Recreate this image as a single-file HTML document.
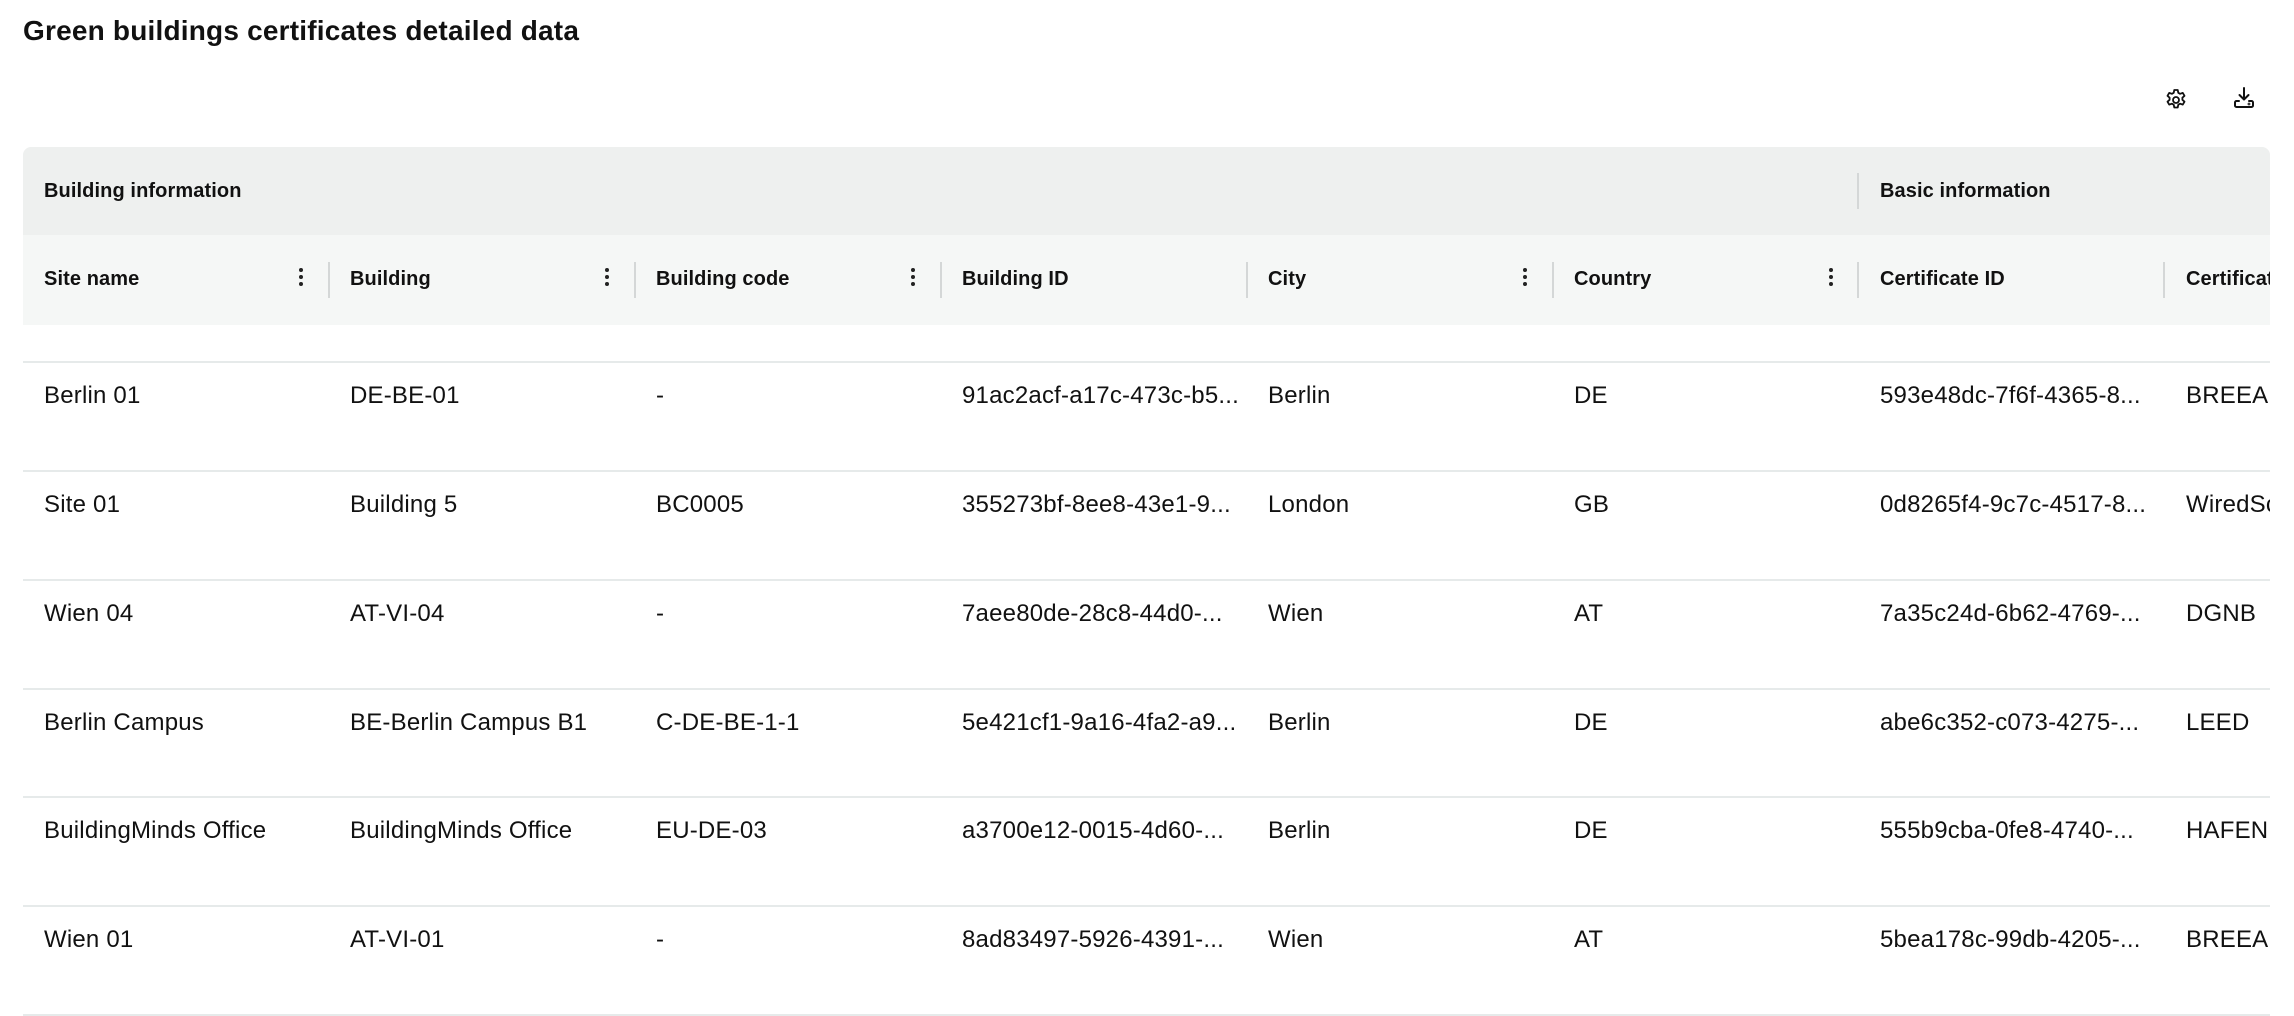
<!DOCTYPE html>
<html><head><meta charset="utf-8"><style>
*{box-sizing:border-box;margin:0;padding:0}
body{width:2294px;height:1016px;background:#fff;font-family:"Liberation Sans",sans-serif;color:#111;position:relative;overflow:hidden}
h1{position:absolute;left:23px;top:15px;font-size:28px;font-weight:bold;letter-spacing:0.2px}
.ic{position:absolute}
.tbl{position:absolute;left:23px;top:147px;width:2247px;height:869px;overflow:hidden;border-radius:8px 8px 0 0}
.g{position:absolute;left:0;top:0;width:100%;height:88px;background:#eef0ef}
.h{position:absolute;left:0;top:88px;width:100%;height:90px;background:#f5f7f6}
.t{position:absolute;font-size:20px;font-weight:bold;white-space:nowrap;letter-spacing:0.1px}
.c{position:absolute;font-size:24px;white-space:nowrap;letter-spacing:0.2px}
.sep{position:absolute;width:2px;background:#d4d7d7}
.dots{position:absolute;width:4px}
.dots i{display:block;width:4px;height:4px;border-radius:2px;background:#222;margin-bottom:3px}
.ln{position:absolute;left:0;width:100%;height:2px;background:#e6eaea}
</style></head><body>
<h1>Green buildings certificates detailed data</h1>
<svg class="ic" style="left:2164px;top:88px" width="24" height="24" viewBox="0 0 24 24" fill="none" stroke="#111" stroke-width="1.8" stroke-linejoin="round"><path d="M10.3 2h3.4l.6 2.8 1.8 1 2.7-.9 1.7 2.9-2.1 1.9v2.1l2.1 1.9-1.7 2.9-2.7-.9-1.8 1-.6 2.8h-3.4l-.6-2.8-1.8-1-2.7.9-1.7-2.9 2.1-1.9v-2.1L3.5 7.8l1.7-2.9 2.7.9 1.8-1z"/><circle cx="12" cy="12" r="3"/></svg>
<svg class="ic" style="left:2232px;top:86px" width="24" height="24" viewBox="0 0 24 24" fill="none" stroke="#111" stroke-width="2" stroke-linecap="round" stroke-linejoin="round"><path d="M12 2v11M7.5 9l4.5 4.5L16.5 9"/><path d="M7 15H4.5A1.5 1.5 0 0 0 3 16.5v3A1.5 1.5 0 0 0 4.5 21h15a1.5 1.5 0 0 0 1.5-1.5v-3a1.5 1.5 0 0 0-1.5-1.5H17"/><circle cx="17" cy="18" r=".4" fill="#111"/></svg>
<div class="tbl">
<div class="g"></div><div class="h"></div>
<div class="t" style="left:21px;top:33px">Building information</div>
<div class="sep" style="left:1834px;top:26px;height:36px"></div>
<div class="t" style="left:1857px;top:33px">Basic information</div>
<div class="t" style="left:21px;top:121px">Site name</div>
<div class="t" style="left:327px;top:121px">Building</div>
<div class="t" style="left:633px;top:121px">Building code</div>
<div class="t" style="left:939px;top:121px">Building ID</div>
<div class="t" style="left:1245px;top:121px">City</div>
<div class="t" style="left:1551px;top:121px">Country</div>
<div class="t" style="left:1857px;top:121px">Certificate ID</div>
<div class="t" style="left:2163px;top:121px">Certificate type</div>
<div class="sep" style="left:305px;top:115px;height:36px"></div>
<div class="sep" style="left:611px;top:115px;height:36px"></div>
<div class="sep" style="left:917px;top:115px;height:36px"></div>
<div class="sep" style="left:1223px;top:115px;height:36px"></div>
<div class="sep" style="left:1529px;top:115px;height:36px"></div>
<div class="sep" style="left:1834px;top:115px;height:36px"></div>
<div class="sep" style="left:2140px;top:115px;height:36px"></div>
<div class="dots" style="left:276px;top:121px"><i></i><i></i><i></i></div>
<div class="dots" style="left:582px;top:121px"><i></i><i></i><i></i></div>
<div class="dots" style="left:888px;top:121px"><i></i><i></i><i></i></div>
<div class="dots" style="left:1500px;top:121px"><i></i><i></i><i></i></div>
<div class="dots" style="left:1806px;top:121px"><i></i><i></i><i></i></div>

<div class="ln" style="top:214px"></div>
<div class="ln" style="top:323px"></div>
<div class="ln" style="top:432px"></div>
<div class="ln" style="top:541px"></div>
<div class="ln" style="top:649px"></div>
<div class="ln" style="top:758px"></div>
<div class="ln" style="top:867px"></div>

<div class="c" style="left:21px;top:235px">Berlin 01</div><div class="c" style="left:327px;top:235px">DE-BE-01</div><div class="c" style="left:633px;top:235px">-</div><div class="c" style="left:939px;top:235px">91ac2acf-a17c-473c-b5...</div><div class="c" style="left:1245px;top:235px">Berlin</div><div class="c" style="left:1551px;top:235px">DE</div><div class="c" style="left:1857px;top:235px">593e48dc-7f6f-4365-8...</div><div class="c" style="left:2163px;top:235px">BREEAM</div>

<div class="c" style="left:21px;top:344px">Site 01</div><div class="c" style="left:327px;top:344px">Building 5</div><div class="c" style="left:633px;top:344px">BC0005</div><div class="c" style="left:939px;top:344px">355273bf-8ee8-43e1-9...</div><div class="c" style="left:1245px;top:344px">London</div><div class="c" style="left:1551px;top:344px">GB</div><div class="c" style="left:1857px;top:344px">0d8265f4-9c7c-4517-8...</div><div class="c" style="left:2163px;top:344px">WiredScore</div>

<div class="c" style="left:21px;top:453px">Wien 04</div><div class="c" style="left:327px;top:453px">AT-VI-04</div><div class="c" style="left:633px;top:453px">-</div><div class="c" style="left:939px;top:453px">7aee80de-28c8-44d0-...</div><div class="c" style="left:1245px;top:453px">Wien</div><div class="c" style="left:1551px;top:453px">AT</div><div class="c" style="left:1857px;top:453px">7a35c24d-6b62-4769-...</div><div class="c" style="left:2163px;top:453px">DGNB</div>

<div class="c" style="left:21px;top:562px">Berlin Campus</div><div class="c" style="left:327px;top:562px">BE-Berlin Campus B1</div><div class="c" style="left:633px;top:562px">C-DE-BE-1-1</div><div class="c" style="left:939px;top:562px">5e421cf1-9a16-4fa2-a9...</div><div class="c" style="left:1245px;top:562px">Berlin</div><div class="c" style="left:1551px;top:562px">DE</div><div class="c" style="left:1857px;top:562px">abe6c352-c073-4275-...</div><div class="c" style="left:2163px;top:562px">LEED</div>

<div class="c" style="left:21px;top:670px">BuildingMinds Office</div><div class="c" style="left:327px;top:670px">BuildingMinds Office</div><div class="c" style="left:633px;top:670px">EU-DE-03</div><div class="c" style="left:939px;top:670px">a3700e12-0015-4d60-...</div><div class="c" style="left:1245px;top:670px">Berlin</div><div class="c" style="left:1551px;top:670px">DE</div><div class="c" style="left:1857px;top:670px">555b9cba-0fe8-4740-...</div><div class="c" style="left:2163px;top:670px">HAFEN</div>

<div class="c" style="left:21px;top:779px">Wien 01</div><div class="c" style="left:327px;top:779px">AT-VI-01</div><div class="c" style="left:633px;top:779px">-</div><div class="c" style="left:939px;top:779px">8ad83497-5926-4391-...</div><div class="c" style="left:1245px;top:779px">Wien</div><div class="c" style="left:1551px;top:779px">AT</div><div class="c" style="left:1857px;top:779px">5bea178c-99db-4205-...</div><div class="c" style="left:2163px;top:779px">BREEAM</div>
</div>
</body></html>
